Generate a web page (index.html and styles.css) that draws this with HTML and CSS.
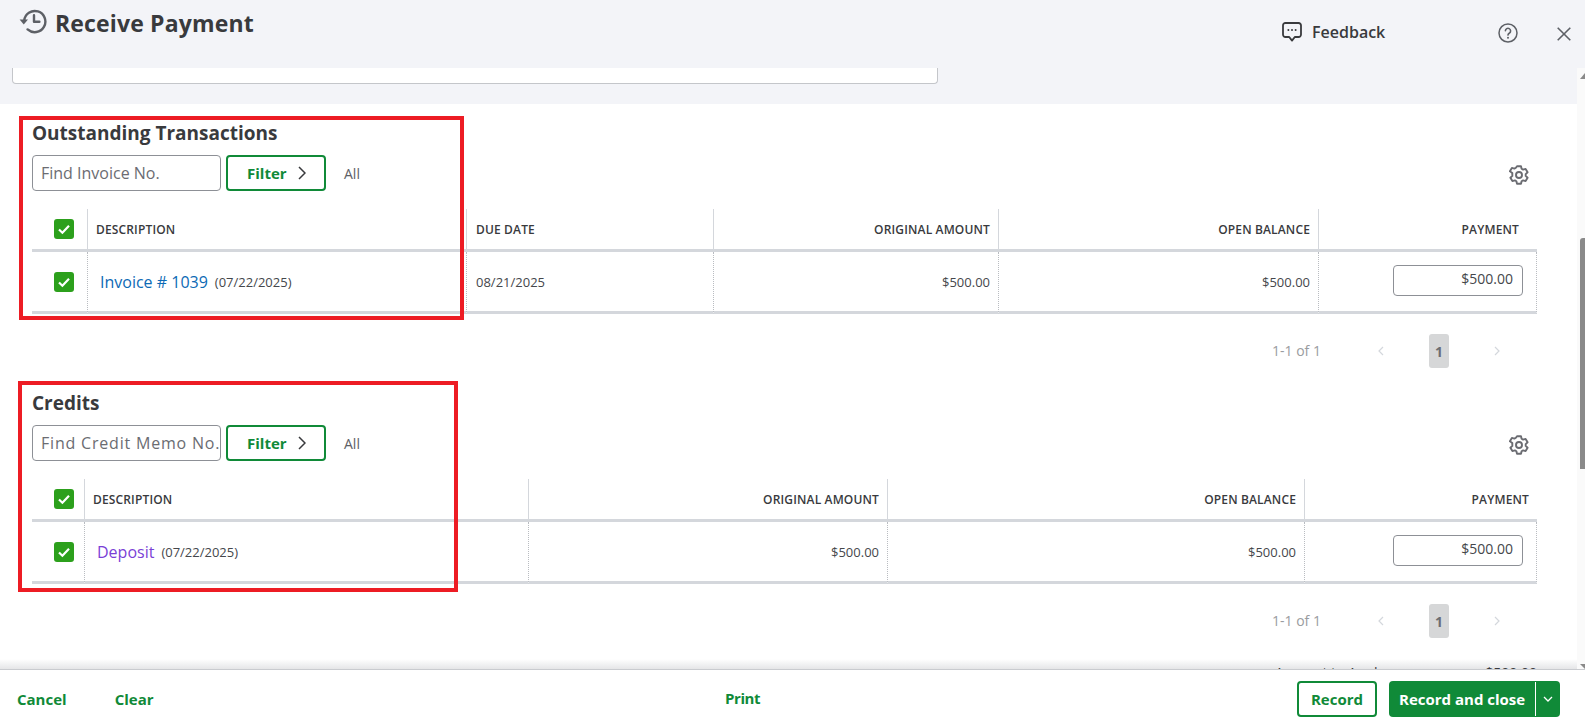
FILE: index.html
```html
<!DOCTYPE html>
<html lang="en">
<head>
<meta charset="utf-8">
<title>Receive Payment</title>
<link rel="stylesheet" href="styles.css">
</head>
<body>
<div class="app">
  <header class="topbar">
    <svg class="history" viewBox="0 0 28 26" aria-hidden="true">
      <path d="M5.2 12.6A10.6 10.6 0 1 1 8.6 21.4" fill="none" stroke="#5d6066" stroke-width="2.4" stroke-linecap="round"/>
      <path d="M.6 11.4h8.4L4.8 16.6z" fill="#5d6066"/>
      <path d="M15 7.2v6.6h5.4" fill="none" stroke="#5d6066" stroke-width="2.4" stroke-linecap="round" stroke-linejoin="round"/>
    </svg>
    <h1 class="page-title">Receive Payment</h1>
    <div class="top-actions">
      <svg class="feedback-icon" viewBox="0 0 20 20" aria-hidden="true">
        <path d="M3.4 1h13.2A2.4 2.4 0 0 1 19 3.4v9.2a2.4 2.4 0 0 1-2.4 2.4h-3.8L10 18.6 7.2 15H3.4A2.4 2.4 0 0 1 1 12.6V3.4A2.4 2.4 0 0 1 3.4 1z" fill="none" stroke="#393a3d" stroke-width="1.8" stroke-linejoin="round"/>
        <circle cx="6.4" cy="8" r="1" fill="#393a3d"/><circle cx="10" cy="8" r="1" fill="#393a3d"/><circle cx="13.6" cy="8" r="1" fill="#393a3d"/>
      </svg>
      <span class="feedback">Feedback</span>
      <svg class="help" viewBox="0 0 20 20" aria-hidden="true">
        <circle cx="10" cy="10" r="9" fill="none" stroke="#5d6066" stroke-width="1.5"/>
        <path d="M7.4 7.8A2.6 2.6 0 1 1 11.5 10c-1 .6-1.5 1.1-1.5 2.1" fill="none" stroke="#5d6066" stroke-width="1.6" stroke-linecap="round"/>
        <circle cx="10" cy="14.8" r="1" fill="#5d6066"/>
      </svg>
      <svg class="close" viewBox="0 0 14 14" aria-hidden="true">
        <path d="M.7.7l12.6 12.6M13.3.7L.7 13.3" fill="none" stroke="#5d6066" stroke-width="1.6"/>
      </svg>
    </div>
  </header>

  <div class="body-row">
    <main class="content">
      <div class="band"><div class="clipped-field"></div></div>

      <section class="panel panel-first">
        <h2 class="section-title">Outstanding Transactions</h2>
        <div class="toolbar">
          <input class="find" type="text" placeholder="Find Invoice No.">
          <button class="filter">Filter
            <svg class="chev" viewBox="0 0 8 14" aria-hidden="true"><path d="M1 1l6 6-6 6" fill="none" stroke="#393a3d" stroke-width="1.5"/></svg>
          </button>
          <span class="all">All</span>
          <svg class="gear" viewBox="0 0 20 20" aria-hidden="true">
            <path d="M8 1.2h4l.6 2.5 1.5.9 2.5-.7 2 3.4-1.9 1.8v1.8l1.9 1.8-2 3.4-2.5-.7-1.5.9-.6 2.5H8l-.6-2.5-1.5-.9-2.5.7-2-3.4 1.9-1.8V8.1L.9 6.3l2-3.4 2.5.7 1.5-.9z" fill="none" stroke="#6b6c72" stroke-width="1.9" stroke-linejoin="round"/>
            <circle cx="10" cy="10" r="3" fill="none" stroke="#6b6c72" stroke-width="1.9"/>
          </svg>
        </div>
        <div class="grid grid-invoices">
          <div class="th th-check"><span class="check"><svg viewBox="0 0 20 20"><path d="M5 10.5l3.4 3.2L15 6.8" fill="none" stroke="#fff" stroke-width="2.2"/></svg></span></div>
          <div class="th">DESCRIPTION</div>
          <div class="th due">DUE DATE</div>
          <div class="th right">ORIGINAL AMOUNT</div>
          <div class="th right">OPEN BALANCE</div>
          <div class="th right last pay-a">PAYMENT</div>
          <div class="td td-check"><span class="check"><svg viewBox="0 0 20 20"><path d="M5 10.5l3.4 3.2L15 6.8" fill="none" stroke="#fff" stroke-width="2.2"/></svg></span></div>
          <div class="td desc-a"><a class="link blue">Invoice # 1039</a><span class="date">(07/22/2025)</span></div>
          <div class="td due">08/21/2025</div>
          <div class="td right">$500.00</div>
          <div class="td right">$500.00</div>
          <div class="td right last"><div class="pay-input">$500.00</div></div>
        </div>
        <div class="pager">
          <span class="count">1-1 of 1</span>
          <svg class="pg-chev" viewBox="0 0 6 10" aria-hidden="true"><path d="M5 1L1 5l4 4" fill="none" stroke="#d4d7dc" stroke-width="1.2"/></svg>
          <span class="page-no">1</span>
          <svg class="pg-chev" viewBox="0 0 6 10" aria-hidden="true"><path d="M1 1l4 4-4 4" fill="none" stroke="#d4d7dc" stroke-width="1.2"/></svg>
        </div>
      </section>

      <section class="panel panel-second">
        <h2 class="section-title">Credits</h2>
        <div class="toolbar">
          <input class="find find-wide" type="text" placeholder="Find Credit Memo No.">
          <button class="filter">Filter
            <svg class="chev" viewBox="0 0 8 14" aria-hidden="true"><path d="M1 1l6 6-6 6" fill="none" stroke="#393a3d" stroke-width="1.5"/></svg>
          </button>
          <span class="all">All</span>
          <svg class="gear" viewBox="0 0 20 20" aria-hidden="true">
            <path d="M8 1.2h4l.6 2.5 1.5.9 2.5-.7 2 3.4-1.9 1.8v1.8l1.9 1.8-2 3.4-2.5-.7-1.5.9-.6 2.5H8l-.6-2.5-1.5-.9-2.5.7-2-3.4 1.9-1.8V8.1L.9 6.3l2-3.4 2.5.7 1.5-.9z" fill="none" stroke="#6b6c72" stroke-width="1.9" stroke-linejoin="round"/>
            <circle cx="10" cy="10" r="3" fill="none" stroke="#6b6c72" stroke-width="1.9"/>
          </svg>
        </div>
        <div class="grid grid-credits">
          <div class="th th-check"><span class="check"><svg viewBox="0 0 20 20"><path d="M5 10.5l3.4 3.2L15 6.8" fill="none" stroke="#fff" stroke-width="2.2"/></svg></span></div>
          <div class="th">DESCRIPTION</div>
          <div class="th right">ORIGINAL AMOUNT</div>
          <div class="th right">OPEN BALANCE</div>
          <div class="th right last">PAYMENT</div>
          <div class="td td-check"><span class="check"><svg viewBox="0 0 20 20"><path d="M5 10.5l3.4 3.2L15 6.8" fill="none" stroke="#fff" stroke-width="2.2"/></svg></span></div>
          <div class="td desc-b"><a class="link purple">Deposit</a><span class="date">(07/22/2025)</span></div>
          <div class="td right">$500.00</div>
          <div class="td right">$500.00</div>
          <div class="td right last"><div class="pay-input">$500.00</div></div>
        </div>
        <div class="pager">
          <span class="count">1-1 of 1</span>
          <svg class="pg-chev" viewBox="0 0 6 10" aria-hidden="true"><path d="M5 1L1 5l4 4" fill="none" stroke="#d4d7dc" stroke-width="1.2"/></svg>
          <span class="page-no">1</span>
          <svg class="pg-chev" viewBox="0 0 6 10" aria-hidden="true"><path d="M1 1l4 4-4 4" fill="none" stroke="#d4d7dc" stroke-width="1.2"/></svg>
        </div>
      </section>

      <div class="apply-row"><span>Amount to Apply</span><span>$500.00</span></div>
      <div class="annot annot-a"></div>
      <div class="annot annot-b"></div>
    </main>
    <aside class="scrollbar">
      <span class="arrow-up"></span>
      <span class="thumb"></span>
      <span class="arrow-down"></span>
    </aside>
  </div>

  <footer class="footer">
    <div class="foot-left"><a class="foot-link">Cancel</a><a class="foot-link">Clear</a></div>
    <a class="foot-link print">Print</a>
    <div class="foot-right">
      <button class="btn-record">Record</button>
      <div class="btn-primary">
        <span class="btn-label">Record and close</span>
        <span class="btn-caret"><svg viewBox="0 0 10 6" aria-hidden="true"><path d="M1 1l4 4 4-4" fill="none" stroke="#fff" stroke-width="1.3"/></svg></span>
      </div>
    </div>
  </footer>
</div>
</body>
</html>
```
FILE: styles.css
```css
* { box-sizing: border-box; }
html, body { margin: 0; height: 100%; overflow: hidden; }
body { font-family: "Open Sans", "Noto Sans", sans-serif; color: #393a3d; background: #fff; }
.app { width: 1585px; height: 723px; display: flex; flex-direction: column; overflow: hidden; }

.topbar { height: 68px; flex: none; background: #f3f4f8; display: flex; align-items: flex-start; }
.history { width: 28px; height: 26px; margin: 8px 0 0 19px; flex: none; }
.page-title { margin: 7px 0 0 8px; font-size: 23px; line-height: 32px; font-weight: 700; letter-spacing: .15px; color: #393a3d; }
.top-actions { margin-left: auto; display: flex; align-items: center; height: 20px; margin-top: 22px; }
.feedback-icon { width: 20px; height: 20px; }
.feedback { font-size: 16px; font-weight: 600; margin-left: 10px; width: 186px; }
.help { width: 20px; height: 20px; margin-top: 2px; }
.close { width: 14px; height: 14px; margin: 4px 14px 0 39px; }

.body-row { flex: 1; min-height: 0; display: flex; position: relative; }
.content { flex: 1; min-width: 0; position: relative; overflow: hidden; }
.content::after { content: ""; position: absolute; left: 0; right: 0; bottom: 0; height: 10px; background: linear-gradient(rgba(230,231,233,0), rgba(226,227,229,.9)); }

.band { height: 36px; background: #f3f4f8; padding-left: 12px; }
.clipped-field { width: 926px; height: 16px; background: #fff; border: 1px solid #c4c6ca; border-top: 0; border-radius: 0 0 4px 4px; }

.panel { padding-left: 32px; width: 1577px; padding-top: 16px; }
.panel-first { height: 270px; }
.panel-second { height: 267px; }
.section-title { margin: 0; font-size: 19px; line-height: 26px; font-weight: 700; color: #393a3d; }
.toolbar { display: flex; align-items: center; width: 1505px; height: 36px; margin-top: 9px; }
.find { width: 189px; height: 36px; border: 1px solid #8d9096; border-radius: 4px; padding: 0 8px; font: 16px "Open Sans", sans-serif; color: #393a3d; background: #fff; outline: none; }
.find-wide { letter-spacing: .8px; padding-right: 0; }
.find::placeholder { color: #6b6c72; opacity: 1; }
.filter { width: 100px; height: 36px; margin-left: 5px; background: #fff; border: 2px solid #108a38; border-radius: 4px; color: #108a38; font: 700 15px "Open Sans", sans-serif; display: flex; align-items: center; padding: 0 0 0 19px; }
.chev { width: 8px; height: 14px; margin-left: 11px; }
.all { margin-left: 18px; font-size: 14px; color: #5d6066; }
.gear { width: 20px; height: 20px; margin: 4px 8px 0 auto; }

.grid { display: grid; width: 1505px; margin-top: 18px; }
.grid-invoices { grid-template-columns: 56px 379px 247px 285px 320px 218px; }
.grid-credits { grid-template-columns: 53px 444px 359px 417px 232px; }
.th { height: 43px; border-bottom: 3px solid #d4d7dc; border-right: 1px solid #d4d7dc; display: flex; align-items: center; padding: 0 8px; font-size: 12px; font-weight: 600; letter-spacing: .15px; color: #393a3d; white-space: nowrap; }
.td { height: 62px; border-bottom: 3px solid #d4d7dc; border-right: 1px dotted #b9bcc1; display: flex; align-items: center; padding: 0 8px; font-size: 13px; color: #45474b; white-space: nowrap; }
.right { justify-content: flex-end; text-align: right; }
.due { padding-left: 9px; }
.th.last { border-right: 0; padding-right: 18px; }
.grid-credits .th.last { padding-right: 8px; }
.pay-a { padding-right: 18px; }
.td.last { padding-right: 13px; }
.th-check, .td-check { padding: 0 0 0 22px; }
.check { width: 20px; height: 20px; background: #2ca01c; border-radius: 3px; display: block; }
.check svg { display: block; width: 20px; height: 20px; }
.desc-a { padding-left: 12px; }
.desc-b { padding-left: 12px; }
.link { font-size: 16px; margin-right: 7px; }
.blue { color: #0d6ab5; }
.purple { color: #7a3fd6; }
.date { font-size: 13px; color: #45474b; }
.pay-input { width: 130px; height: 31px; border: 1px solid #8d9096; border-radius: 4px; padding: 3px 9px 0 0; font-size: 14px; line-height: 20px; color: #45474b; text-align: right; margin-top: -3px; background: #fff; }

.pager { display: flex; align-items: center; width: 1505px; height: 34px; margin-top: 20px; font-size: 14px; }
.count { margin-left: 1240px; width: 47px; margin-top: -2px; color: #9a9ca0; white-space: nowrap; }
.pg-chev { width: 6px; height: 10px; margin-left: 59px; }
.page-no { width: 20px; height: 34px; border-radius: 3px; background: #d6d7d8; color: #6b6c72; font-weight: 700; display: flex; align-items: center; justify-content: center; margin-left: 45px; }
.page-no + .pg-chev { margin-left: 45px; }

.apply-row { position: absolute; right: 40px; top: 595px; width: 262px; display: flex; justify-content: space-between; font-size: 14px; line-height: 20px; color: #393a3d; z-index: 1; }
.annot { position: absolute; border: 4px solid #ed1c24; pointer-events: none; }
.annot-a { left: 19px; top: 48px; width: 445px; height: 204px; }
.annot-b { left: 18px; top: 313px; width: 440px; height: 211px; }

.scrollbar { width: 8px; flex: none; background: #fafafa; position: relative; }
.thumb { position: absolute; top: 170px; left: 3px; width: 5px; height: 231px; background: #8a8a8a; border-radius: 3px 0 0 0; }
.arrow-up { position: absolute; top: 5px; left: 3px; border-left: 5px solid transparent; border-bottom: 6px solid #8a8a8a; }
.arrow-down { position: absolute; bottom: 0; left: 3px; border-left: 5px solid transparent; border-top: 5px solid #8a8a8a; }

.footer { height: 54px; flex: none; background: #fff; border-top: 1px solid #c9cbcf; display: flex; align-items: center; position: relative; padding: 4px 25px 0 17px; }
.foot-left { display: flex; gap: 48px; }
.foot-link { font-size: 15px; font-weight: 700; color: #108a38; }
.print { position: absolute; left: 725px; top: 18px; letter-spacing: -.4px; }
.foot-right { margin-left: auto; display: flex; gap: 12px; }
.btn-record { width: 80px; height: 36px; background: #fff; border: 2px solid #108a38; border-radius: 4px; color: #108a38; font: 700 15px "Open Sans", sans-serif; padding: 0; }
.btn-primary { width: 171px; height: 36px; background: #108a38; border-radius: 4px; color: #fff; font-size: 15px; font-weight: 700; display: flex; align-items: center; }
.btn-label { width: 147px; padding-left: 10px; white-space: nowrap; border-right: 1px solid #fff; height: 34px; line-height: 34px; }
.btn-caret { flex: 1; display: flex; justify-content: center; }
.btn-caret svg { width: 10px; height: 6px; }
```
